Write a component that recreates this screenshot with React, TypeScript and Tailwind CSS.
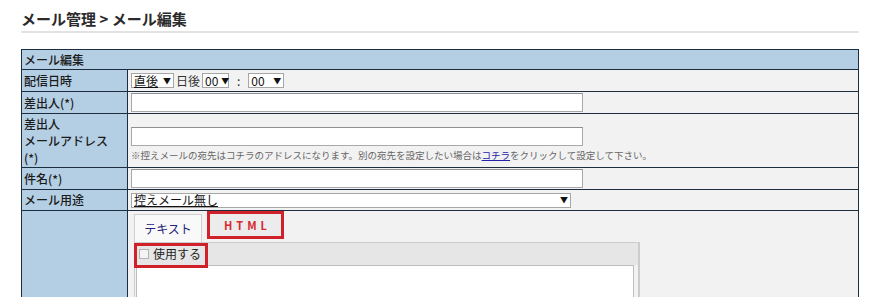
import React from "react";

const font = { fontFamily: '"Noto Sans CJK JP", "Noto Sans", sans-serif' };

function FakeSelect({ value, width, underline }: { value: string; width: string; underline?: boolean }) {
  return (
    <div className={`flex h-[15px] items-center justify-between gap-[3px] border border-[#a6a6a6] bg-white px-[2px] text-[12px] leading-none text-[#111] ${width}`}>
      <span className={underline ? "underline underline-offset-1" : ""}>{value}</span>
      <span className="text-[8px]">▼</span>
    </div>
  );
}

function TextInput() {
  return <div className="h-[19px] w-[452px] border border-[#a9a9a9] border-t-[#8f8f8f] bg-white" />;
}

export default function App() {
  const label = "border border-[#1c2d3e] bg-[#b4cee3] px-[2px] align-middle text-[12px] font-medium text-[#1b1b1b]";
  const cell = "border border-[#1c2d3e] bg-[#f2f2f2] px-[3px] align-middle";

  return (
    <div className="h-[297px] w-[884px] overflow-hidden bg-white" style={font}>
      <div className="px-[21px] pt-[9px]">
        <h1 className="text-[15px] font-bold leading-[20px] text-[#2b2b2b]">メール管理 &gt; メール編集</h1>
        <div className="mt-[2px] h-[2px] w-[838px] bg-[#e2e2e2]" />
      </div>

      <table className="ml-[21px] mt-[16px] w-[838px] border-collapse">
        <tbody>
          <tr className="h-[20px]">
            <td colSpan={2} className={label}>メール編集</td>
          </tr>
          <tr className="h-[22px]">
            <td className={`${label} w-[106px]`}>配信日時</td>
            <td className={cell}>
              <div className="flex items-center gap-[2px] text-[12px] text-[#222]">
                <FakeSelect value="直後" width="w-[43px]" underline />
                <span className="text-[#333]">日後</span>
                <FakeSelect value="00" width="w-[27px]" />
                <span className="px-[6px]">:</span>
                <FakeSelect value="00" width="w-[36px]" />
              </div>
            </td>
          </tr>
          <tr className="h-[22px]">
            <td className={label}>差出人(*)</td>
            <td className={cell}>
              <TextInput />
            </td>
          </tr>
          <tr className="h-[54px]">
            <td className={`${label} leading-[17px]`}>
              差出人
              <br />
              メールアドレス
              <br />
              (*)
            </td>
            <td className={cell}>
              <div className="pt-[7px]">
                <TextInput />
                <p className="mt-[2px] text-[9.5px] leading-[14px] text-[#666]">
                  ※控えメールの宛先はコチラのアドレスになります。別の宛先を設定したい場合は
                  <span className="text-[#2222aa] underline">コチラ</span>
                  をクリックして設定して下さい。
                </p>
              </div>
            </td>
          </tr>
          <tr className="h-[22px]">
            <td className={label}>件名(*)</td>
            <td className={cell}>
              <TextInput />
            </td>
          </tr>
          <tr className="h-[21px]">
            <td className={label}>メール用途</td>
            <td className={cell}>
              <FakeSelect value="控えメール無し" width="w-[440px]" underline />
            </td>
          </tr>
          <tr className="h-[120px]">
            <td className={label}></td>
            <td className="border border-[#1c2d3e] bg-[#f2f2f2] pl-[6px] pt-[3px] align-top">
              <div className="relative w-[506px]">
                <div className="flex items-start gap-[5px]">
                  <div className="flex h-[28px] w-[68px] items-center justify-center border border-b-0 border-[#cfcfcf] bg-[#f9f9f9] text-[12px] text-[#22227a]">
                    テキスト
                  </div>
                  <div className="-mt-[3px] flex h-[28px] w-[77px] items-center justify-center bg-[#ececec] pl-[4px] text-[11px] font-bold tracking-[4px] text-[#d7282e]">
                    HTML
                  </div>
                </div>
                <div className="border border-r-2 border-[#cccccc]">
                  <div className="flex h-[22px] items-center gap-[4px] bg-[#e6e6e6] pl-[4px] text-[12px] text-[#222]">
                    <span className="h-[10px] w-[10px] border border-[#b3b3b3] bg-[#f4f4f4]" />
                    使用する
                  </div>
                  <div className="ml-[1px] mr-[4px] h-[60px] border border-[#bdbdbd] bg-white" />
                </div>
                <div className="pointer-events-none absolute left-[73px] top-[-3px] h-[28px] w-[77px] border-[3px] border-[#d0202a]" />
                <div className="pointer-events-none absolute left-0 top-[29px] h-[25px] w-[74px] border-[3px] border-[#d0202a]" />
              </div>
            </td>
          </tr>
        </tbody>
      </table>
    </div>
  );
}
